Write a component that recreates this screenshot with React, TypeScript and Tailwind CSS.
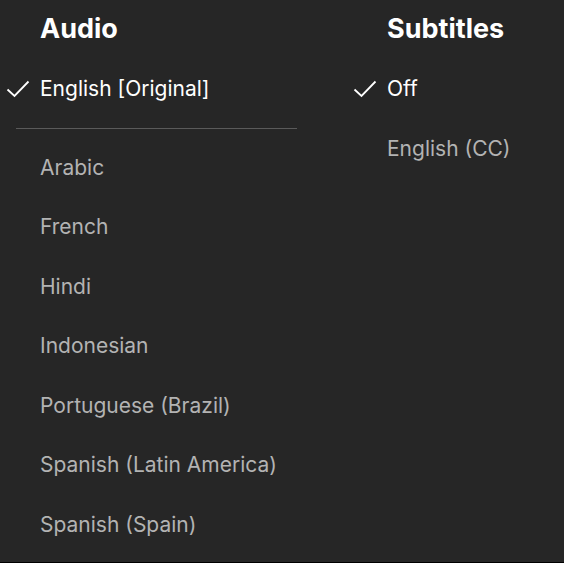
const audio = [
  "Arabic",
  "French",
  "Hindi",
  "Indonesian",
  "Portuguese (Brazil)",
  "Spanish (Latin America)",
  "Spanish (Spain)",
];

function Check() {
  return (
    <svg width="24" height="20" viewBox="0 0 24 20" className="absolute left-[6px] top-1/2 -translate-y-1/2">
      <path d="M1.5 10.5 L8.5 17 L22.5 2.5" fill="none" stroke="#fff" strokeWidth="1.8" />
    </svg>
  );
}

function Item({ label, selected }: { label: string; selected?: boolean }) {
  return (
    <div className="relative h-[59.5px] flex items-center pl-10">
      {selected && <Check />}
      <span className={selected ? "text-white" : "text-[#b3b3b3]"}>{label}</span>
    </div>
  );
}

export default function App() {
  return (
    <div className="bg-black min-h-screen">
      <div
        className="h-[562px] w-[564px] bg-[#262626] flex text-[21px] leading-none"
        style={{ fontFamily: "Inter, 'Liberation Sans', sans-serif" }}
      >
        <div className="w-[347px] pt-[8px]">
          <h2 className="pl-10 text-white font-bold text-[27px] h-[40px] flex items-center">Audio</h2>
          <div className="mt-[11px]">
            <Item label="English [Original]" selected />
          </div>
          <div className="ml-4 w-[281px] h-px bg-[#5a5a5a] mt-[9px] mb-[9px]" />
          <div>
            {audio.map((a) => (
              <Item key={a} label={a} />
            ))}
          </div>
        </div>
        <div className="flex-1 pt-[8px]">
          <h2 className="pl-10 text-white font-bold text-[27px] h-[40px] flex items-center">Subtitles</h2>
          <div className="mt-[11px]">
            <Item label="Off" selected />
            <Item label="English (CC)" />
          </div>
        </div>
      </div>
    </div>
  );
}
